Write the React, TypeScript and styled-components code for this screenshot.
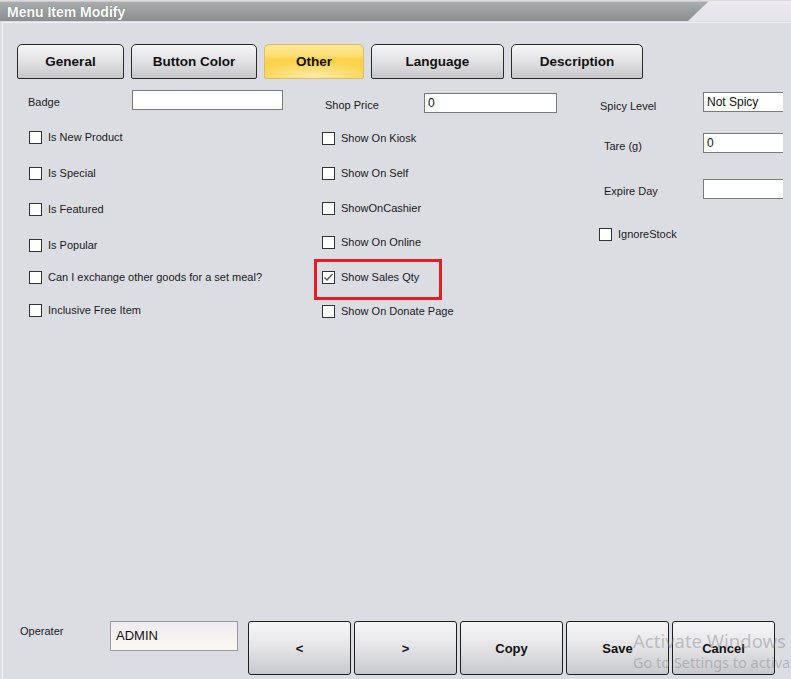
import styled, { createGlobalStyle } from 'styled-components';

const GlobalStyle = createGlobalStyle`
  html, body {
    margin: 0;
    padding: 0;
    background: #dcdde2;
    overflow: hidden;
  }
  * {
    box-sizing: border-box;
  }
`;

const Window = styled.div`
  position: relative;
  width: 791px;
  height: 679px;
  display: flex;
  flex-direction: column;
  background: #dcdde2;
  font-family: 'Liberation Sans', Arial, sans-serif;
  color: #1a1a22;
  overflow: hidden;
`;

const TitleBar = styled.div`
  height: 21px;
  flex-shrink: 0;
  background: linear-gradient(#ece9ef, #e4e5ea);
  border-top: 1px solid #e2d8e4;
  display: flex;
`;

const TitleFill = styled.div`
  width: 709px;
  height: 100%;
  background: linear-gradient(#a9adad, #8b8e90);
  border-top: 1px solid #c6cec4;
  clip-path: polygon(0 0, 100% 0, calc(100% - 21px) 100%, 0 100%);
  display: flex;
  align-items: center;
  padding-left: 7px;
`;

const TitleText = styled.span`
  font-size: 14px;
  font-weight: 700;
  color: #ffffff;
  text-shadow: 0 0 1px rgba(60, 60, 60, 0.6);
`;

const Panel = styled.div`
  flex: 1;
  display: flex;
  flex-direction: column;
  margin: 1px 0 0 2px;
  border-top: 1px solid #f0f0f4;
  border-left: 1px solid #f0f0f4;
  padding: 21px 0 4px 0;
`;

const TabStrip = styled.div`
  display: flex;
  gap: 7px;
  padding-left: 14px;
`;

const Tab = styled.div<{ $w: number; $active?: boolean }>`
  width: ${(p) => p.$w}px;
  height: 35px;
  display: flex;
  align-items: center;
  justify-content: center;
  font-size: 13.5px;
  font-weight: 700;
  color: #111;
  border-radius: 5px 5px 2px 2px;
  border: 1px solid ${(p) => (p.$active ? '#d9bd6a' : '#2a2a2a')};
  background: ${(p) =>
    p.$active
      ? 'radial-gradient(ellipse 60% 45% at 50% 95%, #fdeaa6 0%, rgba(253,234,166,0) 100%), linear-gradient(#fde78f 0%, #fde07a 30%, #fbd24a 45%, #fcd655 100%)'
      : 'linear-gradient(#f4f4f5 0%, #e4e4e6 45%, #c7c7ca 100%)'};
`;

const Content = styled.div`
  flex: 1;
  display: grid;
  grid-template-columns: 286px 285px 1fr;
  align-items: start;
  margin-top: 11px;
  padding: 0 5px 0 25px;
`;

const Column = styled.div<{ $pt?: number }>`
  display: flex;
  flex-direction: column;
  padding-top: ${(p) => p.$pt ?? 0}px;
  overflow: hidden;
`;

const FieldRow = styled.div<{ $mt?: number }>`
  display: flex;
  align-items: flex-start;
  margin-top: ${(p) => p.$mt ?? 0}px;
`;

const FieldLabel = styled.span<{ $w: number; $ml?: number; $pt?: number }>`
  width: ${(p) => p.$w}px;
  margin-left: ${(p) => p.$ml ?? 0}px;
  padding-top: ${(p) => p.$pt ?? 6}px;
  font-size: 11px;
  line-height: 13px;
  flex-shrink: 0;
`;

const TextBox = styled.div<{ $w: number; $cut?: boolean }>`
  width: ${(p) => p.$w}px;
  height: 20px;
  background: #ffffff;
  border: 1px solid #7a7a7a;
  border-right: ${(p) => (p.$cut ? 'none' : '1px solid #7a7a7a')};
  font-size: 12px;
  line-height: 18px;
  padding-left: 3px;
  color: #111;
  flex-shrink: 0;
`;

const CheckRow = styled.div<{ $mt: number; $pl?: number; $marked?: boolean }>`
  position: relative;
  display: flex;
  align-items: center;
  gap: 6px;
  height: 14px;
  margin-top: ${(p) => p.$mt}px;
  padding-left: ${(p) => p.$pl ?? 1}px;
  font-size: 11px;

  ${(p) =>
    p.$marked &&
    `
    &::after {
      content: '';
      position: absolute;
      left: ${(p.$pl ?? 1) - 8}px;
      top: -11px;
      width: 122px;
      height: 35px;
      border: 3px solid #e31e26;
    }
  `}
`;

const Box = styled.span`
  width: 13px;
  height: 13px;
  background: #ffffff;
  border: 1px solid #333;
  display: flex;
  align-items: center;
  justify-content: center;
  flex-shrink: 0;
`;

const Footer = styled.div`
  display: flex;
  align-items: flex-start;
  padding-left: 17px;
`;

const OperatorBox = styled.div`
  width: 128px;
  height: 30px;
  margin-right: 10px;
  border: 1px solid #9c98a6;
  background: linear-gradient(#f1eaf3, #fbf8f2);
  font-size: 13px;
  line-height: 28px;
  padding-left: 5px;
  color: #111;
`;

const ButtonBar = styled.div`
  display: flex;
  gap: 3px;
`;

const ActionButton = styled.div`
  width: 103px;
  height: 54px;
  border: 1px solid #1e1e1e;
  border-radius: 3px;
  background: linear-gradient(#f6f6f8 0%, #e6e6e9 45%, #c8c9cd 100%);
  display: flex;
  align-items: center;
  justify-content: center;
  padding-top: 1px;
  font-size: 13px;
  font-weight: 700;
  color: #111;
`;

const Watermark = styled.div`
  position: absolute;
  left: 633px;
  top: 630px;
  pointer-events: none;
  font-family: 'Noto Sans', 'Open Sans', sans-serif;
  color: rgba(130, 130, 138, 0.45);
  white-space: nowrap;
  line-height: 1.15;
`;

const WatermarkTitle = styled.div`
  font-size: 18.5px;
`;

const WatermarkSub = styled.div`
  margin-top: 3px;
  font-size: 14.5px;
`;

const Check = ({ checked }: { checked?: boolean }) => (
  <Box>
    {checked && (
      <svg width="11" height="11" viewBox="0 0 11 11">
        <polyline points="1.5,5.5 4,8 9.5,2" fill="none" stroke="#5a5a5a" strokeWidth="1.4" />
      </svg>
    )}
  </Box>
);

const tabs = [
  { label: 'General', w: 107 },
  { label: 'Button Color', w: 126 },
  { label: 'Other', w: 100, active: true },
  { label: 'Language', w: 133 },
  { label: 'Description', w: 132 },
];

const leftChecks = [
  { label: 'Is New Product', mt: 20 },
  { label: 'Is Special', mt: 22 },
  { label: 'Is Featured', mt: 22 },
  { label: 'Is Popular', mt: 22 },
  { label: 'Can I exchange other goods for a set meal?', mt: 18 },
  { label: 'Inclusive Free Item', mt: 19 },
];

const middleChecks = [
  { label: 'Show On Kiosk', mt: 18 },
  { label: 'Show On Self', mt: 21 },
  { label: 'ShowOnCashier', mt: 21 },
  { label: 'Show On Online', mt: 20 },
  { label: 'Show Sales Qty', mt: 21, checked: true },
  { label: 'Show On Donate Page', mt: 20 },
];

const buttons = ['<', '>', 'Copy', 'Save', 'Cancel'];

const App = () => (
  <>
    <GlobalStyle />
    <Window>
      <TitleBar>
        <TitleFill>
          <TitleText>Menu Item Modify</TitleText>
        </TitleFill>
      </TitleBar>

      <Panel>
        <TabStrip>
          {tabs.map((t) => (
            <Tab key={t.label} $w={t.w} $active={t.active}>
              {t.label}
            </Tab>
          ))}
        </TabStrip>

        <Content>
          <Column>
            <FieldRow>
              <FieldLabel $w={104} $pt={6}>Badge</FieldLabel>
              <TextBox $w={151} />
            </FieldRow>
            {leftChecks.map((c) => (
              <CheckRow key={c.label} $mt={c.mt}>
                <Check />
                {c.label}
              </CheckRow>
            ))}
          </Column>

          <Column $pt={3}>
            <FieldRow>
              <FieldLabel $w={99} $ml={11} $pt={6}>Shop Price</FieldLabel>
              <TextBox $w={133}>0</TextBox>
            </FieldRow>
            {middleChecks.map((c) => (
              <CheckRow key={c.label} $mt={c.mt} $pl={8} $marked={c.checked}>
                <Check checked={c.checked} />
                {c.label}
              </CheckRow>
            ))}
          </Column>

          <Column $pt={2}>
            <FieldRow>
              <FieldLabel $w={103} $ml={1} $pt={8}>Spicy Level</FieldLabel>
              <TextBox $w={80} $cut>Not Spicy</TextBox>
            </FieldRow>
            <FieldRow $mt={20}>
              <FieldLabel $w={99} $ml={5} $pt={7}>Tare (g)</FieldLabel>
              <TextBox $w={80} $cut>0</TextBox>
            </FieldRow>
            <FieldRow $mt={26}>
              <FieldLabel $w={99} $ml={5} $pt={6}>Expire Day</FieldLabel>
              <TextBox $w={80} $cut />
            </FieldRow>
            <CheckRow $mt={28} $pl={0}>
              <Check />
              IgnoreStock
            </CheckRow>
          </Column>
        </Content>

        <Footer>
          <FieldLabel $w={90} $pt={4}>Operater</FieldLabel>
          <OperatorBox>ADMIN</OperatorBox>
          <ButtonBar>
            {buttons.map((b) => (
              <ActionButton key={b}>{b}</ActionButton>
            ))}
          </ButtonBar>
        </Footer>
      </Panel>

      <Watermark>
        <WatermarkTitle>Activate Windows</WatermarkTitle>
        <WatermarkSub>Go to Settings to activate Windows.</WatermarkSub>
      </Watermark>
    </Window>
  </>
);

export default App;
